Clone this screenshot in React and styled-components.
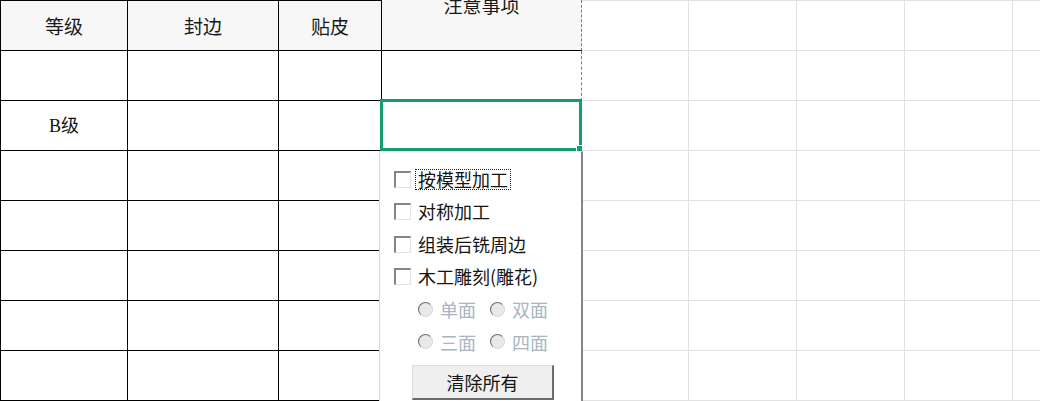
import React from 'react';
import styled, { createGlobalStyle, css } from 'styled-components';

const GlobalStyle = createGlobalStyle`
  html, body {
    margin: 0;
    padding: 0;
    background: #ffffff;
    overflow: hidden;
  }
  body {
    font-family: 'Noto Sans CJK SC', 'Noto Sans', sans-serif;
  }
`;

const Sheet = styled.div`
  position: relative;
  display: grid;
  grid-template-columns: 128px 151px 103px 200px 107px repeat(4, 108px);
  grid-template-rows: 51px repeat(8, 50px);
  width: 1040px;
  height: 401px;
  overflow: hidden;
`;

const tableBorders = css`
  border-right: 1px solid #000;
  border-bottom: 1px solid #000;
`;

const notesBorders = css`
  border-right: 1px dashed #7a7a7a;
  border-bottom: 1px solid #000;
`;

const freeBorders = css`
  border-right: 1px solid #e1e1e1;
  border-bottom: 1px solid #e1e1e1;
`;

const Cell = styled.div`
  box-sizing: border-box;
  display: flex;
  align-items: center;
  justify-content: center;
  min-width: 0;
  background: ${p => (p.$head ? '#f7f7f7' : '#ffffff')};
  ${p => (p.$kind === 'table' ? tableBorders : p.$kind === 'notes' ? notesBorders : freeBorders)}
  ${p => p.$top && p.$kind === 'table' && 'border-top: 1px solid #000;'}
  ${p => p.$top && p.$kind === 'free' && 'border-top: 1px solid #e1e1e1;'}
  ${p => p.$first && 'border-left: 1px solid #000;'}
  ${p => p.$raised && 'align-items: flex-start;'}
`;

const HeadText = styled.span`
  font-size: 19px;
  line-height: 26px;
  color: #1a1a1a;
  white-space: nowrap;
  margin-top: ${p => (p.$raised ? '-8px' : '0')};
`;

const BodyText = styled.span`
  font-family: 'Liberation Serif', 'Noto Sans CJK SC', serif;
  font-size: 18px;
  line-height: 22px;
  color: #111;
  white-space: nowrap;
`;

const Selection = styled.div`
  position: absolute;
  left: 380px;
  top: 99px;
  width: 202px;
  height: 52px;
  box-sizing: border-box;
  border: 3px solid #169b6b;
  pointer-events: none;
`;

const FillHandle = styled.div`
  position: absolute;
  right: -3px;
  bottom: -3px;
  width: 6px;
  height: 6px;
  box-sizing: border-box;
  background: #169b6b;
  border: 1px solid #ffffff;
  border-right: none;
  border-bottom: none;
`;

const Dropdown = styled.div`
  position: absolute;
  left: 379px;
  top: 151px;
  width: 204px;
  height: 260px;
  box-sizing: border-box;
  background: #ffffff;
  border-left: 1px solid #d6d6d6;
  border-top: 1px solid #e6e6e6;
  border-right: 2px solid #858585;
  padding-top: 11px;
  font-family: 'Noto Sans CJK SC', sans-serif;
`;

const OptionList = styled.div`
  display: grid;
  grid-auto-rows: 32.5px;
  padding-left: 14px;
`;

const CheckRow = styled.label`
  display: flex;
  align-items: center;
`;

const CheckBox = styled.span`
  width: 17px;
  height: 17px;
  box-sizing: border-box;
  background: #ffffff;
  border-style: solid;
  border-width: 2px 1px 1px 2px;
  border-color: #858585 #e3e3e3 #e3e3e3 #858585;
`;

const CheckLabel = styled.span`
  margin-left: 4px;
  padding: 0 2px;
  border: 1px dotted ${p => (p.$focused ? '#222' : 'transparent')};
  font-size: 18px;
  line-height: 19px;
  color: #141414;
  white-space: nowrap;
`;

const RadioRow = styled.div`
  display: flex;
  align-items: center;
  padding-left: 24px;
`;

const RadioItem = styled.span`
  display: flex;
  align-items: center;
  gap: 7px;
  width: 72px;
`;

const RadioDot = styled.span`
  width: 15px;
  height: 15px;
  box-sizing: border-box;
  border-radius: 50%;
  background: #e8e8e8;
  border: 1px solid;
  border-color: #6f6f6f #d8d8d8 #d8d8d8 #6f6f6f;
`;

const RadioText = styled.span`
  font-size: 18px;
  line-height: 20px;
  color: #a9b5c2;
  white-space: nowrap;
`;

const ClearButton = styled.button`
  display: block;
  margin: 7px 0 0 32px;
  width: 142px;
  height: 35px;
  box-sizing: border-box;
  padding: 0;
  background: #efefef;
  border-style: solid;
  border-width: 1px 2px 2px 1px;
  border-color: #dcdcdc #6a6a6a #6a6a6a #dcdcdc;
  font-family: 'Noto Sans CJK SC', sans-serif;
  font-size: 18px;
  color: #141414;
`;

const headers = ['等级', '封边', '贴皮', '注意事项'];
const bodyRows = [[''], ['B级'], [''], [''], [''], [''], ['']];
const freeCols = 5;

const checks = ['按模型加工', '对称加工', '组装后铣周边', '木工雕刻(雕花)'];
const radioRows = [['单面', '双面'], ['三面', '四面']];

export default function App() {
  return (
    <>
      <GlobalStyle />
      <Sheet>
        {headers.map((h, i) => (
          <Cell
            key={`h-${i}`}
            $head
            $top
            $first={i === 0}
            $kind={i === 3 ? 'notes' : 'table'}
            $raised={i === 3}
          >
            <HeadText $raised={i === 3}>{h}</HeadText>
          </Cell>
        ))}
        {Array.from({ length: freeCols }).map((_, i) => (
          <Cell key={`hf-${i}`} $top $kind="free" />
        ))}

        {bodyRows.map((row, r) => (
          <React.Fragment key={`r-${r}`}>
            {[0, 1, 2, 3].map(c => (
              <Cell key={c} $first={c === 0} $kind={c === 3 ? 'notes' : 'table'}>
                {c === 0 && row[0] && <BodyText>{row[0]}</BodyText>}
              </Cell>
            ))}
            {Array.from({ length: freeCols }).map((_, i) => (
              <Cell key={`f-${i}`} $kind="free" />
            ))}
          </React.Fragment>
        ))}
        {Array.from({ length: 9 }).map((_, i) => (
          <Cell key={`tail-${i}`} $kind="free" />
        ))}

        <Selection>
          <FillHandle />
        </Selection>

        <Dropdown>
          <OptionList>
            {checks.map((label, i) => (
              <CheckRow key={label}>
                <CheckBox />
                <CheckLabel $focused={i === 0}>{label}</CheckLabel>
              </CheckRow>
            ))}
            {radioRows.map((pair, i) => (
              <RadioRow key={i}>
                {pair.map(t => (
                  <RadioItem key={t}>
                    <RadioDot />
                    <RadioText>{t}</RadioText>
                  </RadioItem>
                ))}
              </RadioRow>
            ))}
          </OptionList>
          <ClearButton type="button">清除所有</ClearButton>
        </Dropdown>
      </Sheet>
    </>
  );
}
